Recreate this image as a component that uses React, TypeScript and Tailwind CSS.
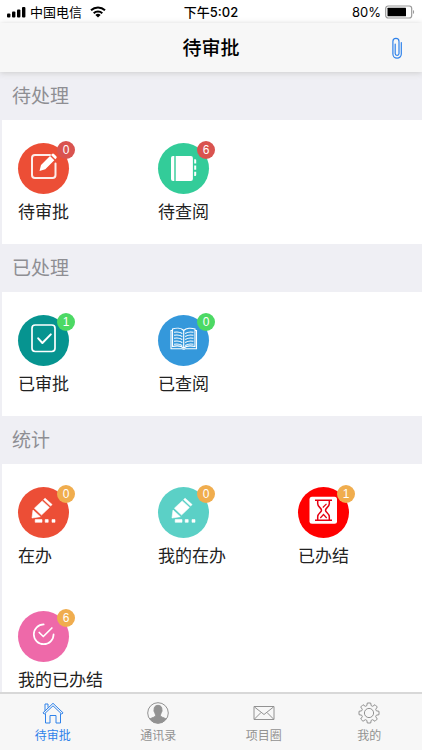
import type { ReactNode } from "react";
import clsx from "clsx";

interface Tile {
  label: string;
  count: number;
  color: string;
  icon: ReactNode;
}

interface Section {
  title: string;
  badge: string;
  tiles: Tile[];
}

const EditIcon = () => (
  <svg viewBox="0 0 51 51" className="size-full" fill="none">
    <path
      d="M32 12H17a3 3 0 0 0-3 3v17a3 3 0 0 0 3 3h17.500a3 3 0 0 0 3-3V20.500"
      stroke="#fff"
      strokeOpacity=".9"
      strokeWidth="2"
      strokeLinecap="round"
    />
    <path d="m21.500 28 1.500-6 9-9 4.300 4.300-9 9zM33 12l1-1a1.400 1.400 0 0 1 2 0l2.300 2.300a1.400 1.400 0 0 1 0 2l-1 1z" fill="#fff" />
  </svg>
);

const NotebookIcon = () => (
  <svg viewBox="0 0 51 51" className="size-full" fill="#fff">
    <path d="M16.300 13v25H15a2 2 0 0 1-2-2V15a2 2 0 0 1 2-2z" />
    <path d="M17.700 13h15.200a2 2 0 0 1 2 2v21a2 2 0 0 1-2 2H17.700z" />
    <path d="M36.200 16.300h1a1 1 0 0 1 1 1v3.200h-2zM36.200 22.500h2v4.200h-2zM36.200 28.800h2V32a1 1 0 0 1-1 1h-1z" />
  </svg>
);

const CheckedCardIcon = () => (
  <svg viewBox="0 0 51 51" className="size-full" fill="none" stroke="#fff" strokeLinecap="round" strokeLinejoin="round">
    <rect x="14" y="10" width="23" height="26.500" rx="3.200" strokeWidth="1.700" />
    <path d="m20.200 23.300 4.200 4.700 8.400-8.600" strokeWidth="2" />
  </svg>
);

const OpenBookIcon = () => (
  <svg viewBox="0 0 51 51" className="size-full" fill="none" stroke="#fff" strokeWidth="1.100">
    <path d="M14.500 15.500H13v18.300h11.500q1.200 1 2.400 0h11.600V15.500H37" />
    <path d="M25.700 15.500c-2.500-2.600-7.500-2.800-11.200-1.500v17.500c4-1 8.500-.9 11.200 1.500 2.700-2.400 7.300-2.500 11.300-1.500V14c-3.700-1.300-8.800-1.100-11.300 1.500zV33" />
    <path d="M16 17.300c3-.7 6-.3 8.300 1.200M16 20.300c3-.7 6-.3 8.300 1.200M16 23.300c3-.7 6-.3 8.300 1.200M16 26.300c3-.7 6-.3 8.300 1.200M16 29.300c3-.7 6-.3 8.300 1.200M35.500 17.300c-3-.7-6-.3-8.300 1.200M35.500 20.300c-3-.7-6-.3-8.300 1.200M35.500 23.300c-3-.7-6-.3-8.300 1.200M35.500 26.300c-3-.7-6-.3-8.300 1.200M35.500 29.300c-3-.7-6-.3-8.300 1.200" />
  </svg>
);

const PencilIcon = () => (
  <svg viewBox="0 0 51 51" className="size-full" fill="#fff" stroke="#fff" strokeWidth=".6" strokeLinejoin="round">
    <path d="m25.600 12.600 1.500-1.400 7 6.400-1.500 1.500z" />
    <path d="m16.400 21.200 7.800-7.300 7.200 6.600-7.900 7.500z" />
    <path d="m15 23 7.300 6.700-8.300 1.300z" />
    <path d="M17.200 32.600h6.800v2.700h-6.800zM27.200 32.600h3v2.700h-3zM34 32.600h3v2.700h-3z" />
  </svg>
);

const HourglassIcon = () => (
  <svg viewBox="0 0 51 51" className="size-full" fill="none">
    <rect x="11.500" y="9.800" width="27.500" height="27" rx="2.500" fill="#fff" />
    <path
      d="M17 13.200h17M17 33.200h17M19.700 13.500v3.200c0 3.300 3.800 4.300 3.800 6.500s-3.800 3.200-3.800 6.500V33M31.300 13.500v3.200c0 3.300-3.800 4.300-3.800 6.500s3.800 3.200 3.800 6.500V33"
      stroke="#e60012"
      strokeWidth="1.500"
    />
    <path d="m24.800 20.500 3.700-3.700M22.300 31l3.200-3.500 3.200 3.500" stroke="#e60012" strokeWidth="1.200" />
  </svg>
);

const DoneIcon = () => (
  <svg viewBox="0 0 51 51" className="size-full" fill="none" stroke="#fff" strokeWidth="1.700" strokeLinecap="round">
    <path d="M25.700 13.400a9.900 9.900 0 1 0 9.900 9.900" />
    <path d="m21.200 21.500 4.100 4 8.600-8.500" strokeLinejoin="round" />
  </svg>
);

const sections: Section[] = [
  {
    title: "待处理",
    badge: "bg-[#d9534f]",
    tiles: [
      { label: "待审批", count: 0, color: "bg-[#ec4e36]", icon: <EditIcon /> },
      { label: "待查阅", count: 6, color: "bg-[#33cc99]", icon: <NotebookIcon /> },
    ],
  },
  {
    title: "已处理",
    badge: "bg-[#4cd964]",
    tiles: [
      { label: "已审批", count: 1, color: "bg-[#069490]", icon: <CheckedCardIcon /> },
      { label: "已查阅", count: 0, color: "bg-[#3498db]", icon: <OpenBookIcon /> },
    ],
  },
  {
    title: "统计",
    badge: "bg-[#f0ad4e]",
    tiles: [
      { label: "在办", count: 0, color: "bg-[#ec4e36]", icon: <PencilIcon /> },
      { label: "我的在办", count: 0, color: "bg-[#5bd0c6]", icon: <PencilIcon /> },
      { label: "已办结", count: 1, color: "bg-[#ff0000]", icon: <HourglassIcon /> },
      { label: "我的已办结", count: 6, color: "bg-[#ee69a9]", icon: <DoneIcon /> },
    ],
  },
];

const tabs = [
  {
    label: "待审批",
    icon: (
      <>
        <path d="M1 10.800 11 1.300l10 9.500-1.200 1.300L11 3.800l-8.800 8.300z" />
        <path d="M3.500 11.500v9.500H8v-7.500h6V21h4.500v-9.500M3 8.800V2h3v3.500" />
      </>
    ),
  },
  {
    label: "通讯录",
    icon: (
      <>
        <circle cx="11" cy="11" r="10.300" />
        <path
          d="M11 3.300c-2.600 0-4 1.700-3.900 4.200 0 .7-.4 1 .1 2.200.2.700.6.800.7 1.300.2 1 .7 1.300.7 2.500 0 1.800-3.500 1.900-5.600 3.500A10 10 0 0 0 11 21a10 10 0 0 0 8-4c-2.100-1.600-5.600-1.700-5.600-3.500 0-1.200.5-1.500.7-2.500.1-.5.5-.6.7-1.300.5-1.200.1-1.500.1-2.200.1-2.500-1.300-4.200-3.900-4.200z"
          fill="currentColor"
        />
      </>
    ),
  },
  {
    label: "项目圈",
    icon: <path d="M1 4.500h20v13H1zM1.500 5l9.500 7.500L20.500 5M1.500 17l6.500-6.500M20.500 17l-6.500-6.500" />,
  },
  {
    label: "我的",
    icon: (
      <>
        <circle cx="11" cy="11" r="4.600" />
        <path
          d="M9.300 1h3.400l.5 2.700 1.500.6 2.300-1.600 2.300 2.300-1.600 2.300.6 1.500 2.700.5v3.400l-2.700.5-.6 1.500 1.600 2.300-2.300 2.300-2.300-1.600-1.500.6-.5 2.700H9.300l-.5-2.700-1.500-.6L5 19.300 2.700 17l1.600-2.300-.6-1.500L1 12.700V9.300l2.700-.5.6-1.500L2.700 5 5 2.700l2.300 1.600 1.500-.6z"
          strokeLinejoin="round"
        />
      </>
    ),
  },
];

function StatusBar() {
  return (
    <div className="grid h-[23px] shrink-0 grid-cols-3 items-center bg-white px-[7px] text-[13px] leading-5 text-black">
      <div className="flex items-center gap-1">
        <svg viewBox="0 0 19 12" className="h-3 w-[19px]">
          <rect x="0" y="7.500" width="3.400" height="4" rx="1" />
          <rect x="5" y="5.500" width="3.400" height="6" rx="1" />
          <rect x="10" y="3.500" width="3.400" height="8" rx="1" />
          <rect x="15" y="1" width="3.400" height="10.500" rx="1" />
        </svg>
        <span className="whitespace-nowrap">中国电信</span>
        <svg viewBox="0 0 16 12" className="ml-1 h-3 w-4" fill="none" stroke="#000" strokeWidth="2">
          <path d="M1 4.300a10.200 10.200 0 0 1 14 0M3.700 7.200a6.200 6.200 0 0 1 8.600 0" />
          <path d="M5.400 8.900a3.800 3.800 0 0 1 5.200 0L8 11.600z" fill="#000" stroke="none" />
        </svg>
      </div>
      <span className="text-center font-medium">下午5:02</span>
      <div className="flex items-center justify-end gap-1">
        <span>80%</span>
        <svg viewBox="0 0 30 14" className="h-3.5 w-[30px]">
          <rect x=".7" y="1" width="26" height="12" rx="2.500" fill="none" stroke="#999" strokeWidth="1.200" />
          <rect x="2.500" y="2.800" width="18.500" height="8.400" rx=".5" />
          <path d="M28 5c1.500.5 1.500 3.500 0 4z" fill="#999" />
        </svg>
      </div>
    </div>
  );
}

export default function App() {
  return (
    <div className="flex h-screen flex-col bg-[#efeff4] font-[Inter,'Noto_Sans_CJK_SC',sans-serif]">
      <StatusBar />
      <header className="z-10 grid h-[49px] shrink-0 grid-cols-[1fr_auto_1fr] items-center bg-[#f7f7f7] px-4 pt-0.5 shadow-[0_1px_6px_#cccccc]">
        <h1 className="col-start-2 text-[19px] leading-6 font-medium text-black">待审批</h1>
        <button type="button" aria-label="附件" className="justify-self-end text-[#2f82ea]">
          <svg viewBox="0 0 18 24" className="h-6 w-[18px]" fill="none" stroke="currentColor" strokeWidth="1.200" strokeLinecap="round">
            <path d="M13.300 5.500v11.500a4.200 4.200 0 0 1-8.400 0V4.500a3 3 0 0 1 6.100 0v12a1.900 1.900 0 0 1-3.800 0V7" />
          </svg>
        </button>
      </header>

      <main className="min-h-0 flex-1 overflow-y-auto [scrollbar-width:none]">
        {sections.map((section) => (
          <section key={section.title}>
            <h2 className="flex h-12 items-center px-3 pt-0.5 text-[19px] leading-6 font-normal text-[#8e8e93]">
              {section.title}
            </h2>
            <div className="ml-0.5 grid grid-cols-3 bg-white">
              {section.tiles.map((tile) => (
                <button
                  key={tile.label}
                  type="button"
                  className="flex flex-col items-start gap-1.5 pt-[23px] pb-5 pl-4 text-left"
                >
                  <span className={clsx("relative block size-[51px] rounded-full", tile.color)}>
                    {tile.icon}
                    <span
                      className={clsx(
                        "absolute -top-0.5 -right-1.5 flex size-[18px] items-center justify-center rounded-full font-['Liberation_Sans',sans-serif] text-xs leading-4 text-white",
                        section.badge
                      )}
                    >
                      {tile.count}
                    </span>
                  </span>
                  <span className="text-[17px] leading-6 whitespace-nowrap text-[#222222]">{tile.label}</span>
                </button>
              ))}
            </div>
          </section>
        ))}
      </main>

      <nav className="grid h-[58px] shrink-0 grid-cols-4 border-t-2 border-[#d8d8d8] bg-[#f7f7f7]">
        {tabs.map((tab, i) => (
          <a
            key={tab.label}
            href="#"
            className={clsx(
              "flex flex-col items-center gap-1 pt-2 text-xs leading-4",
              i === 0 ? "text-[#2f82ea]" : "text-[#929292]"
            )}
          >
            <svg viewBox="0 0 22 22" className="size-[22px]" fill="none" stroke="currentColor" strokeWidth="1">
              {tab.icon}
            </svg>
            <span>{tab.label}</span>
          </a>
        ))}
      </nav>
    </div>
  );
}
